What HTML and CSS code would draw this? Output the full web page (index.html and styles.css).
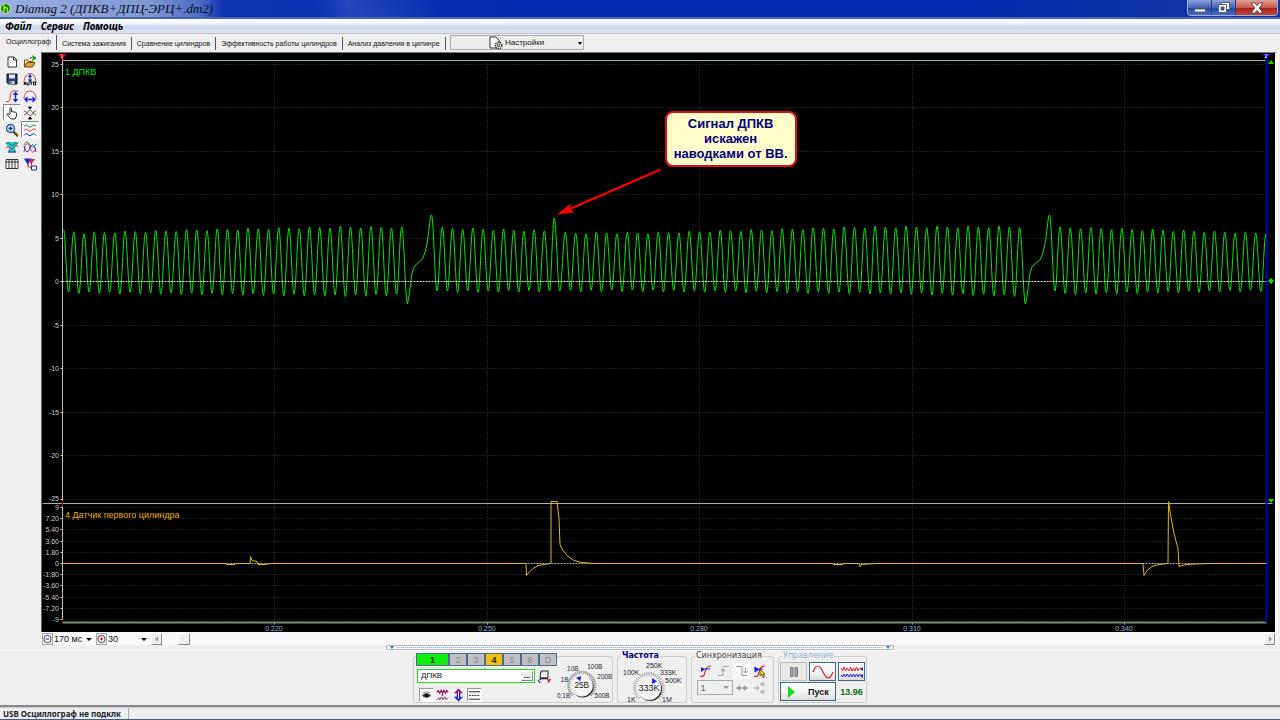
FILE: index.html
```html
<!DOCTYPE html>
<html lang="ru">
<head>
<meta charset="utf-8">
<title>Diamag 2</title>
<link rel="stylesheet" href="styles.css">
</head>
<body>
<header class="titlebar">
  <svg class="app-icon" width="11" height="11" viewBox="0 0 11 11"><circle cx="5.5" cy="5.5" r="5" fill="#138a13" stroke="#d8f0a0"/><path d="M4 2v7M4 6c1-2 3-2 3.500 0v3" fill="none" stroke="#c8f040" stroke-width="1.200"/></svg>
  <h1 class="app-title">Diamag 2 (ДПКВ+ДПЦ-ЭРЦ+.dm2)</h1>
  <div class="window-buttons">
    <button class="win-btn win-min" aria-label="Свернуть"><svg width="14" height="12" viewBox="0 0 14 12"><rect x="1.500" y="7" width="11" height="3" fill="#fff" stroke="#555d7a"/></svg></button>
    <button class="win-btn win-max" aria-label="Развернуть"><svg width="14" height="13" viewBox="0 0 14 13"><path d="M4.500 1.500h8v7h-8z" fill="#fff" stroke="#555d7a"/><path d="M1.500 3.500h8v8h-8z" fill="#fff" stroke="#555d7a"/><path d="M4 6h3v3H4z" fill="#2a48a8" stroke="#555d7a"/></svg></button>
    <button class="win-btn win-close" aria-label="Закрыть"><svg width="14" height="12" viewBox="0 0 14 12"><path d="M1 1h4l2 2.500L9 1h4L9.200 6 13 11H9L7 8.500 5 11H1l3.800-5z" fill="#fff" stroke="#5b4550"/></svg></button>
  </div>
</header>
<nav class="menubar">
  <button class="menu-item">Файл</button><button class="menu-item">Сервис</button><button class="menu-item">Помощь</button>
</nav>
<div class="tabs">
  <button class="tab active">Осциллограф</button><button class="tab">Система зажигания</button><button class="tab">Сравнение цилиндров</button><button class="tab">Эффективность работы цилиндров</button><button class="tab">Анализ давления в цилинре</button>
  <button class="settings"><svg width="14" height="14" viewBox="0 0 14 14"><path d="M1 1h6l3 3v8H1z" fill="#fff" stroke="#333"/><circle cx="9.500" cy="9.500" r="3.300" fill="#dfe8df" stroke="#344034" stroke-width="1.500" stroke-dasharray="1.500 .8"/><circle cx="9.500" cy="9.500" r="1.300" fill="#eee" stroke="#344034"/></svg><span>Настройки</span><i class="caret"></i></button>
</div>
<main class="workspace">
  <aside class="tools">
    <button class="tool" aria-label="Новый"><svg viewBox="0 0 14 14"><path d="M3 2h6l2.500 2.500V12H3zM8.500 2v3h3" fill="#fff" stroke="#333"/></svg></button>
    <button class="tool" aria-label="Открыть"><svg viewBox="0 0 14 14"><path d="M1.500 12V5h3l1 1.500h4V8" fill="#fff0a0" stroke="#6b5510"/><path d="M1.500 12l2.500-4.500h8L9.500 12z" fill="#e0a528" stroke="#6b4a10"/><path d="M7 4q1-2 2-1.500" fill="none" stroke="#333"/><path d="M9.500 0l4 3-4 3.500z" fill="#10a010"/></svg></button>
    <button class="tool" aria-label="Сохранить"><svg viewBox="0 0 14 14"><path d="M2 2h10v10H3.500L2 10.500z" fill="#27376e" stroke="#111"/><path d="M4 2.500h6v4H4z" fill="#dfe6f7"/><path d="M4.500 9h5v3h-5z" fill="#c8cedc"/><path d="M5.500 9.500h1v2h-1z" fill="#111"/></svg></button>
    <button class="tool" aria-label="Автоматически"><svg viewBox="0 0 14 14"><path d="M1 11C1 5 4 1.500 7 1.500S13 5 13 11" fill="none" stroke="#e23a3a"/><path d="M7 3v6M5.500 5L7 3l1.500 2M5.500 7.500L7 9.500l1.500-2" fill="none" stroke="#1722a8" stroke-width="1.200"/><path d="M1 13l1-3 1 3M4 10v3h2v-3M7 10h2.500M8.200 10v3M10.500 10h2v3h-2z" fill="none" stroke="#111"/></svg></button>
    <button class="tool" aria-label="Амплитуда"><svg viewBox="0 0 14 14"><path d="M1 12.500h2c2 0 2-3 2.500-6s1-4.500 2.500-4.500h5" fill="none" stroke="#e23a3a"/><path d="M10.500 4v8M8.500 6l2-2.500 2 2.500M8.500 10l2 2.500 2-2.500" fill="none" stroke="#1722d8" stroke-width="1.300"/></svg></button>
    <button class="tool" aria-label="Длительность"><svg viewBox="0 0 14 14"><path d="M1 10C1 5 4 2 7 2s6 3 6 8" fill="none" stroke="#e23a3a"/><path d="M2 10.500h10M4.500 8L2 10.500 4.500 13M9.500 8l2.500 2.500L9.500 13" fill="none" stroke="#1722d8" stroke-width="1.300"/></svg></button>
    <button class="tool pressed" aria-label="Рука"><svg viewBox="0 0 14 14"><path d="M5 8V2.500c0-1.300 1.500-1.300 1.500 0V6c0-1 1.700-1 1.700.3 0-1 1.700-.8 1.700.4 0-.8 1.600-.6 1.600.6V10l-1.500 3H6L2 8.500C1.500 7.500 3 7 5 9" fill="#fff" stroke="#333"/></svg></button>
    <button class="tool" aria-label="Центрировать"><svg viewBox="0 0 14 14"><path d="M1 5c3 0 4 5 6 5s3-5 6-5" fill="none" stroke="#e23a3a"/><path d="M1 9c3 0 4-5 6-5s3 5 6 5" fill="none" stroke="#20903a"/><path d="M5.500 1h3L7 3zM5.500 13h3L7 11z" fill="#111" stroke="#111"/></svg></button>
    <button class="tool" aria-label="Лупа"><svg viewBox="0 0 14 14"><path d="M8 8l5 5" stroke="#9a6a20" stroke-width="2.500"/><path d="M8 9l4.500 4.500" stroke="#222"/><circle cx="5.500" cy="5.500" r="4" fill="#cfe8fb" stroke="#24578e" stroke-width="1.300"/><path d="M3.500 5.500h4M5.500 3.500v4" stroke="#12308a" stroke-width="1.300"/></svg></button>
    <button class="tool pressed" aria-label="Раздельно"><svg viewBox="0 0 14 14" fill="none"><path d="M1 3.500Q3 .5 5 3t4 0 4 0" stroke="#20903a"/><path d="M1 7.500Q3 4.500 5 7t4 0 4 0" stroke="#e23a3a"/><path d="M1 12.500Q3 9 5 11.500t4 0 4 1" stroke="#1722d8"/></svg></button>
    <button class="tool" aria-label="Зеркало"><svg viewBox="0 0 14 14"><path d="M2 2h10v3.500L10 8v4H4V8L2 5.500z" fill="#12d5dc"/><path d="M1 4q2-3 4 0t4 0 4 0" fill="none" stroke="#16803a" stroke-width="1.200"/><path d="M1 8q2-3 4 0t4-1 4 0" fill="none" stroke="#d22a2a"/><path d="M4 12h6M4 10v3M10 10v3" stroke="#1722a8"/></svg></button>
    <button class="tool" aria-label="Совместно"><svg viewBox="0 0 14 14" fill="none"><path d="M1 5c2-5 4-3 6 0s4 3 6-1" stroke="#20903a"/><path d="M1 12C3 1 5 2 7 8s4 5 6 0" stroke="#e23a3a"/><path d="M1 6c2 8 4 7 6 2s4-5 6 4" stroke="#1722d8"/></svg></button>
    <button class="tool" aria-label="Таблица"><svg viewBox="0 0 14 14"><path d="M1 2.500h12v9H1zM1 5h12M4 2.500v9M7 2.500v9M10 2.500v9" fill="#fff" stroke="#333"/></svg></button>
    <button class="tool" aria-label="Фильтр"><svg viewBox="0 0 14 14"><path d="M1 1.500h8L5.500 6v3z" fill="#1722d8"/><path d="M5.500 2h7L9 6v4z" fill="#d22a4a"/><path d="M5 6v4h3" fill="none" stroke="#d22a2a"/><path d="M8.500 9h5v4h-5z" fill="#fff" stroke="#1722a8"/></svg></button>
  </aside>
  <section class="scope">
    <div class="plot">
      <svg class="chart" id="chart" role="img" aria-label="Осциллограмма"></svg>
      <div class="callout">Сигнал ДПКВ<br>искажен<br>наводками от ВВ.</div>
    </div>
    <div class="range">
      <button class="mini" aria-label="Уменьшить"><svg width="10" height="10" viewBox="0 0 10 10"><circle cx="5" cy="5" r="4" fill="#fff" stroke="#333"/><path d="M3 5h4" stroke="#1722a8" stroke-width="1.200"/></svg></button>
      <label class="pick pick-time"><select aria-label="Развертка"><option>170 мс</option></select></label>
      <button class="mini" aria-label="Увеличить"><svg width="10" height="10" viewBox="0 0 10 10"><circle cx="5" cy="5" r="4" fill="#fff" stroke="#333"/><path d="M3 5h4M5 3v4" stroke="#b01010" stroke-width="1.200"/></svg></button>
      <label class="pick pick-count"><select aria-label="Количество"><option>30</option></select></label>
      <button class="mini raised" aria-label="Влево"><svg width="6" height="6" viewBox="0 0 6 6"><path d="M4 0v6L1 3z" fill="#999"/></svg></button>
      <div class="track"><div class="thumb"></div></div>
      <button class="mini raised" aria-label="Вправо"><svg width="6" height="6" viewBox="0 0 6 6"><path d="M2 0v6l3-3z" fill="#999"/></svg></button>
    </div>
  </section>
</main>
<div class="splitter"><i class="caret blue"></i><span class="dots"></span><i class="caret blue"></i></div>
<section class="panel">
  <fieldset class="group channel">
    <div class="channel-main">
      <div class="channels"><button class="ch ch-on">1</button><button class="ch">2</button><button class="ch">3</button><button class="ch ch-amber">4</button><button class="ch">5</button><button class="ch">6</button><button class="ch">D</button></div>
      <div class="name-row"><div class="name-box"><input aria-label="Имя канала" value="ДПКВ"><button class="more" aria-label="Выбрать">...</button></div>
        <button class="flat" aria-label="Датчик"><svg width="14" height="14" viewBox="0 0 14 14"><path d="M4 1h7v7H3z" fill="#eee" stroke="#222"/><path d="M3 8.500h8" stroke="#222" stroke-width="1.500"/><path d="M4 9.500q-4 0-1 3M1 10.500l2 2.500" fill="none" stroke="#1722d8"/><path d="M10 9.500q4 1 1 3M13.500 9l-2.500 3.500" fill="none" stroke="#e02020" stroke-width="1.300"/></svg></button></div>
      <div class="view-row">
        <button class="view on" aria-label="Показать"><svg width="14" height="14" viewBox="0 0 14 14"><path d="M2 7.500q5-5 10 0-5 5-10 0z" fill="#444"/><circle cx="7" cy="7.500" r="2" fill="#111"/><path d="M3 5q4-3 8 0" fill="none" stroke="#888"/></svg></button>
        <button class="view" aria-label="Сигнал"><svg width="14" height="14" viewBox="0 0 14 14" fill="none" stroke="#8a1470"><path d="M1 4l1.500-1.500L4 5l1.500-3L7 5l1.500-3L10 5l1.500-3L13 4" stroke-width="1.300"/><path d="M1 12l2-2 1 2 2-3 1.500 3 2-3 1.500 3 2-2"/><path d="M5.500 6.500h3L7 8z" fill="#222" stroke="none"/></svg></button>
        <button class="view" aria-label="Сдвиг"><svg width="14" height="14" viewBox="0 0 14 14"><path d="M7 0l5 5H9v2H5V5H2z" fill="#8a1470"/><path d="M7 14l5-5H9V7H5v2H2z" fill="#1722e8"/><path d="M7 3v8" stroke="#eee"/></svg></button>
        <button class="view on" aria-label="Линии"><svg width="14" height="14" viewBox="0 0 14 14" stroke="#222"><path d="M1 3.500h12M1 11.500h12"/><path d="M1 7.500h12" stroke-dasharray="2 1"/></svg></button>
      </div>
    </div>
    <svg class="knob" id="volts" width="60" height="45" viewBox="0 0 60 45" role="img" aria-label="Предел 25 В"></svg>
  </fieldset>
  <fieldset class="group freq"><legend>Частота</legend>
    <svg class="knob" id="freq" width="66" height="44" viewBox="0 0 66 44" role="img" aria-label="Частота 333K"></svg>
  </fieldset>
  <fieldset class="group sync"><legend>Синхронизация</legend>
    <div class="sync-grid">
      <button class="flat" aria-label="Фронт"><svg width="14" height="14" viewBox="0 0 14 14" fill="none"><path d="M1 12q4 2 5-4t6-6" stroke="#e02020" stroke-width="1.200"/><path d="M2 5h9" stroke="#1722e8"/><path d="M2 3v5l3.500-2.500z" fill="#1722e8"/></svg></button>
      <button class="flat" aria-label="Нарастание"><svg width="14" height="14" viewBox="0 0 14 14" fill="none" stroke="#aaa"><path d="M1 11.500h5V2.500h6M3.500 6h5M4.500 7.500L6 5.500l1.500 2"/></svg></button>
      <button class="flat lit" aria-label="Спад"><svg width="14" height="14" viewBox="0 0 14 14" fill="none" stroke="#999"><path d="M1 2.500h6v9h5M10.500 4v5M8.500 7l2 2 2-2"/></svg></button>
      <button class="flat" aria-label="Курсор"><svg width="14" height="14" viewBox="0 0 14 14"><path d="M1 12q4 2 5-4t6-6" fill="none" stroke="#e02020" stroke-width="1.200"/><path d="M1 5h9M2 3v5l3.500-2.500z" fill="#1722e8" stroke="#1722e8"/><path d="M7 5v7l1.500-1.500 1.500 3 1.500-.7-1.500-2.500H12z" fill="#ffe020" stroke="#222" stroke-width=".7"/></svg></button>
      <label class="pick pick-sync"><select aria-label="Канал синхронизации" disabled><option>1</option></select></label>
      <button class="flat" aria-label="Сжать"><svg width="14" height="14" viewBox="0 0 14 14"><path d="M1 7h4M13 7H9" stroke="#999" stroke-width="1.500"/><path d="M3.500 4v6L7 7zM10.500 4v6L7 7z" fill="#999"/></svg></button>
      <button class="flat" aria-label="Точка"><svg width="14" height="14" viewBox="0 0 14 14" fill="none" stroke="#999"><path d="M1 7h5M4 5l2 2-2 2M12 4H8l3-3M8 4V2M12 10H8l3 3M8 10v2"/></svg></button>
    </div>
  </fieldset>
  <fieldset class="group run"><legend>Управление</legend>
    <div class="run-grid">
      <button class="cmd dim" aria-label="Пауза"><svg width="10" height="12" viewBox="0 0 10 12"><path d="M1.500 1.500h2.500v9H1.500zM6 1.500h2.500v9H6z" fill="#aaa" stroke="#777"/></svg></button>
      <button class="cmd" aria-label="Синус"><svg width="22" height="14" viewBox="0 0 22 14"><path d="M1 7C4-1 7-1 11 7s7 8 10 0" fill="none" stroke="#e22020" stroke-width="1.200"/></svg></button>
      <button class="cmd" aria-label="Импульсы"><svg width="24" height="14" viewBox="0 0 24 14" fill="none"><path d="M1 3l1.500 3L4 2l1.500 4L7 3l2 3 1.500-4L12 6l1.500-3L15 6l1.500-4L18 6l1.500-3 2 2" stroke="#e22020"/><path d="M1 10l1.500 2L4 9l1.500 3L7 9l2 3 1.500-3L12 12l1.500-3 1.500 3 1.500-3 1.500 3 1.500-3 2 2" stroke="#1722e8"/><path d="M23 2v4l-3-2zM23 9v4l-3-2z" fill="#1722a8"/></svg></button>
      <button class="cmd start"><svg width="9" height="12" viewBox="0 0 9 12"><path d="M1 0v12l7-6z" fill="#10e010"/></svg><span>Пуск</span></button>
      <output class="volt">13.96</output>
    </div>
  </fieldset>
</section>
<footer class="status"><span class="status-text">USB Осциллограф не подклк</span></footer>
<script src="scope.js"></script>
</body>
</html>
```

FILE: styles.css
```css
* { box-sizing: border-box; }
body {
  margin: 0; height: 100vh; display: flex; flex-direction: column; overflow: hidden;
  background: #efefef; color: #111; font: 8px/10px "Liberation Sans", Arial, sans-serif;
  border-bottom: 1px solid #4258a0;
}
button, input, select { font: inherit; color: inherit; margin: 0; padding: 0; border: 0; background: none; border-radius: 0; }
button { display: flex; align-items: center; justify-content: center; white-space: nowrap; }
svg { display: block; }

.titlebar {
  flex: none; height: 19px; display: flex; align-items: center; gap: 4px; color: #101018;
  background:
    linear-gradient(90deg, rgba(160,182,228,.95) 0, rgba(138,162,216,.9) 150px, rgba(100,130,205,.7) 200px, transparent 224px),
    linear-gradient(65deg, transparent 290px, rgba(70,105,205,.4) 320px, rgba(40,80,195,.3) 375px, transparent 400px),
    linear-gradient(90deg, #1438b4 0, #0229ae 45%, #0229ae 75%, #12389f 100%);
  border-bottom: 2px solid #4a62b0;
}
.app-title { flex: 1; margin: 0; font: italic 13px/16px "Liberation Serif", serif; }
.window-buttons { display: flex; align-self: flex-start; margin-right: 2px; border: 1px solid #9fb0dc; border-top: 0; border-radius: 0 0 4px 4px; overflow: hidden; }
.win-btn { height: 15px; width: 24px; background: linear-gradient(#8fa3dc, #4562b8 50%, #2443a0 52%, #4c6cc4); border-right: 1px solid #25387c; }
.win-close { width: 41px; border-right: 0; background: linear-gradient(#e0a29a, #c8584c 50%, #a82018 52%, #c04838); }

.menubar { flex: none; height: 15px; display: flex; gap: 9px; padding-left: 5px; background: linear-gradient(#fff, #eef1f9 35%, #d3daec 50%, #dce2f2); border-bottom: 1px solid #bfc3cc; }
.menu-item { font: italic bold 10px/14px "Noto Sans", sans-serif; color: #000; }

.tabs { flex: none; height: 18px; display: flex; align-items: flex-end; padding: 1px 0 2px 1px; }
.tab { height: 13px; padding: 0 5px; border-right: 1px solid #555; font-size: 7px; }
.tab.active { align-self: flex-start; height: 15px; padding-bottom: 2px; }
.settings { position: relative; width: 134px; height: 15px; margin-left: 4px; gap: 2px; border: 1px solid #aaa; background: #ededed; }
.settings .caret { position: absolute; right: 1px; top: 6px; }
.caret { display: block; width: 0; height: 0; border: 2px solid transparent; border-top: 3px solid #000; border-bottom: 0; }

.workspace { flex: 1; min-height: 0; display: flex; }
.tools { flex: none; width: 41px; display: grid; grid-template-columns: 18px 18px; grid-auto-rows: 17px; padding: 1px 0 0 3px; align-content: start; }
.tool { border: 1px solid transparent; }
.tool svg { width: 14px; height: 14px; }
.pressed { background: #f9f9f9; border-color: #888 #fff #fff #888; }

.scope { flex: 1; min-width: 0; display: flex; flex-direction: column; margin-right: 2px; border-right: 3px solid #fff; border-top: 1px solid #777; }
.plot { flex: 1; min-height: 0; position: relative; background: #000; border-left: 1px solid #666; }
.chart { width: 100%; height: 100%; position: absolute; }
.chart text { font-family: "Liberation Sans", Arial, sans-serif; }
.callout {
  position: absolute; left: 50.5%; top: 10%; padding: 3px 7px 4px; border: 2px solid #e01010; border-radius: 8px;
  background: #ffffcc; color: #000080; font-weight: bold; font-size: 13px; line-height: 15px; text-align: center; white-space: nowrap;
}
.range { flex: none; height: 13px; display: flex; align-items: center; gap: 1px; background: #fafafa; padding-left: 1px; font-size: 9px; }
.mini { width: 11px; height: 12px; border: 1px solid #aaa; background: #eee; }
.raised { border-color: #fff #888 #888 #fff; }
.pick { position: relative; display: block; }
.pick select { appearance: none; width: 100%; height: 12px; outline: 0; }
.pick::after { content: ""; position: absolute; right: 3px; top: 5px; border: 3px solid transparent; border-top-color: #000; border-bottom: 0; }
.pick-time { width: 41px; }
.pick-count { width: 42px; }
.track { flex: 1; height: 12px; padding-left: 15px; background: #f8f8f8; }
.thumb { width: 12px; height: 12px; background: #eee; border: 1px solid; border-color: #fff #888 #888 #fff; }

.splitter { flex: none; width: 508px; height: 5px; margin: 0 auto; display: flex; align-items: center; gap: 3px; padding: 0 3px; border: 1px solid #bbb; background: #f4f6f8; }
.dots { flex: 1; height: 1px; background: repeating-linear-gradient(90deg, #78b4e8 0 1px, #dceaf5 1px 2px); }
.blue { border-top-color: #2078c0; }

.panel { flex: none; display: flex; justify-content: center; align-items: flex-end; gap: 4px; padding: 1px 0 2px; border-top: 1px solid #fff; border-bottom: 2px solid #888; }
.group { margin: 0; padding: 0; min-width: 0; border: 1px solid #ccc; border-radius: 3px; }
.group legend { height: 8px; margin-left: 3px; padding: 0 1px; font: bold 8px/8px "DejaVu Sans", sans-serif; color: #000080; }
.channel { width: 200px; height: 47px; display: flex; justify-content: space-between; padding: 0 0 0 2px; }
.channel-main { display: flex; flex-direction: column; gap: 3px; margin-top: -4px; }
.channels { display: flex; }
.ch { width: 18px; height: 13px; border: 1px solid #4c6c90; background: #bfc0c4; color: #888; font-size: 9px; }
.ch-on { width: 33px; background: #10ee10; color: #004000; font-weight: bold; }
.ch-amber { background: #f5c010; color: #222; font-weight: bold; }
.name-row { display: flex; gap: 2px; margin-left: 1px; }
.name-box { width: 118px; height: 14px; display: flex; padding: 1px; border: 1px solid #20e020; background: #fff; }
.name-box input { flex: 1; min-width: 0; padding-left: 2px; outline: 0; font-size: 8px; }
.more { width: 12px; background: #eee; border: 1px solid; border-color: #fff #888 #888 #fff; font-weight: bold; }
.view-row { display: flex; gap: 1px; margin-left: 3px; }
.view { width: 15px; height: 14px; border: 1px solid transparent; }
.on { border-color: #999 #fff #fff #999; background: #f8f8f8; }
.knob { align-self: flex-end; }
.knob text { font-family: "Liberation Sans", Arial, sans-serif; }
.freq { width: 70px; height: 51px; }
.sync { width: 83px; height: 51px; }
.group.sync legend { color: #444; font-weight: normal; }
.group.run legend { color: #8fb0d4; font-weight: normal; }
.sync-grid { display: grid; grid-template-columns: repeat(4, 18px); gap: 1px 0; justify-content: center; padding-top: 3px; }
.flat { height: 16px; }
.lit { background: #f8f8f8; }
.pick-sync { grid-column: span 2; border: 1px solid #aaa; height: 15px; color: #666; font-size: 9px; }
.pick-sync select { height: 13px; padding-left: 3px; opacity: 1; }
.pick-sync::after { border-top-color: #999; }
.run { width: 89px; height: 51px; }
.run-grid { display: grid; grid-template-columns: 27px 27px 27px; gap: 1px 2px; padding: 2px 1px 0; grid-template-rows: 19px 19px; }
.cmd { border: 1px solid #3c6890; background: linear-gradient(#fff, #f4f4f4 55%, #dcdcdc); }
.dim { border-color: #bbb; background: #e8e8e8; }
.start { grid-column: span 2; gap: 12px; font-weight: bold; font-size: 9px; }
.volt { align-self: center; justify-self: center; color: #107010; font-weight: bold; font-size: 9px; }

.status { flex: none; height: 12px; border-top: 1px solid #ccc; }
.status-text { display: block; width: 129px; height: 11px; padding-left: 3px; overflow: hidden; white-space: nowrap; border-right: 1px solid #aaa; font: bold 8px/11px "Noto Sans", sans-serif; color: #223; }
```

FILE: scope.js
```js
const NS = "http://www.w3.org/2000/svg";

function add(parent, name, attrs, text) {
  const el = document.createElementNS(NS, name);
  for (const key in attrs) el.setAttribute(key, attrs[key]);
  if (text !== undefined) el.textContent = text;
  parent.appendChild(el);
  return el;
}

// Linear interpolation through [position, value] pairs.
function along(points, t) {
  for (let i = 1; i < points.length; i++) {
    const [a, va] = points[i - 1], [b, vb] = points[i];
    if (t <= b) return va + (vb - va) * (t - a) / (b - a);
  }
  return points[points.length - 1][1];
}

const W = 1233, H = 579;
const LEFT = 20, RIGHT = 1224;
const TOPS = [[20, 177], [40, 180], [160, 177], [300, 174], [400, 175], [505, 178], [525, 180], [610, 180], [830, 174], [980, 174], [1040, 175], [1213, 180]];
const BOTTOMS = [[20, 239], [50, 239], [300, 242], [360, 241], [396, 238], [590, 237], [870, 240], [970, 242], [1030, 240], [1213, 237]];

// Crests of one run of teeth; each is followed by a trough half a period on.
function run(first, last, count) {
  const out = [], step = (last - first) / count;
  for (let i = 0; i <= count; i++) {
    const x = first + i * step;
    out.push([x, along(TOPS, x) + (i % 3) * .8 - .8]);
    if (i < count) out.push([x + step / 2, along(BOTTOMS, x) + (i % 2) * 1.5]);
  }
  return out;
}

function gap(x) {
  return [[x, 251], [x + 24, 162], [x + 29.5, 238]];
}

function crankPath(sx, sy) {
  const keys = [...run(21.5, 359.7, 33), ...gap(365.5), ...run(400.3, 502.3, 10), [507.5, 238], [512.2, 165], [517.8, 238],
    ...run(523.3, 977.7, 44), ...gap(983.5), ...run(1018, 1224, 20)];
  let d = `M${keys[0][0] * sx} ${keys[0][1] * sy}`;
  for (let i = 1; i < keys.length; i++) {
    const [x0, y0] = keys[i - 1], [x1, y1] = keys[i];
    if (x1 - x0 > 20) {
      for (const [dx, y] of [[2, 240], [4, 223], [6, 215], [9, 211], [12, 209], [15, 206], [18, 198], [20, 188], [22, 172], [23, 164]]) d += `L${(x0 + dx) * sx} ${y * sy}`;
      d += `L${x1 * sx} ${y1 * sy}`;
    } else {
      const m = (x1 - x0) * .38;
      d += `C${(x0 + m) * sx} ${y0 * sy} ${(x1 - m) * sx} ${y1 * sy} ${x1 * sx} ${y1 * sy}`;
    }
  }
  return d;
}

const CYLINDER = [[20, 510], [183, 510], [184, 511], [193, 511], [194, 510], [208, 510], [208.5, 503], [210, 507], [215, 508], [216, 511], [223, 511], [229, 510],
  [484, 510], [484.5, 522], [487, 519], [491, 515], [496, 512], [502, 511], [509, 510], [509, 448], [515, 448], [517, 465], [518, 491], [521, 497], [526, 503], [532, 507], [540, 509], [552, 510],
  [790, 510], [792, 511], [801, 511], [802, 510], [817, 510], [818, 513], [819, 511], [834, 510],
  [1101, 510], [1102, 522], [1105, 517], [1110, 513], [1117, 511], [1126, 510], [1126.5, 448], [1129, 464], [1132, 480], [1136, 495], [1137, 513], [1144, 511], [1166, 510], [1224, 510]];

function draw() {
  const svg = document.getElementById("chart");
  svg.textContent = "";
  const w = svg.clientWidth, h = svg.clientHeight, sx = w / W, sy = h / H;
  const line = (x1, y1, x2, y2, stroke, extra) =>
    add(svg, "line", { x1: Math.round(x1 * sx) + .5, y1: Math.round(y1 * sy) + .5, x2: Math.round(x2 * sx) + .5, y2: Math.round(y2 * sy) + .5, stroke, ...extra });
  const label = (x, y, text, fill, size, anchor) =>
    add(svg, "text", { x: x * sx, y: y * sy, fill, "font-size": size, "text-anchor": anchor }, text);
  const dots = { "stroke-dasharray": "1 2" };

  for (let i = -5; i <= 5; i++) {
    const y = 228 - i * 43.5;
    if (i) line(LEFT, y, RIGHT, y, "#383838", dots);
    line(LEFT - 2, y, LEFT, y, "#ccc");
    label(17, y + (i === -5 ? 2 : 3), i * 5, "#ccc", 7, "end");
  }
  for (let i = -5; i <= 5; i++) {
    const y = 510 - i * 11.2;
    if (i) line(LEFT, y, RIGHT, y, "#343434", dots);
    line(LEFT - 2, y, LEFT, y, "#ccc");
    label(17, y + 3, Math.abs(i) === 5 ? i * 9 / 5 : i ? (i * 1.8).toFixed(2) : 0, "#ccc", 7, "end");
  }
  [[232, "0.220"], [445, "0.250"], [657, "0.280"], [870, "0.310"], [1082, "0.340"]].forEach(([x, t]) => {
    line(x, 10, x, 569, "#383838", dots);
    line(x, 569, x, 571, "#ccc");
    label(x, 578, t, "#8cb8dc", 7, "middle");
  });
  line(LEFT, 7, RIGHT, 7, "#9cbf9c");
  line(0, 450, 1230, 450, "#aaa");
  line(LEFT, 569, RIGHT, 569, "#789078", { "stroke-width": 2 });
  line(LEFT, 5, LEFT, 569, "#bbb");
  line(RIGHT, 5, RIGHT, 569, "#0000b8", { "stroke-width": 2 });
  add(svg, "path", { d: crankPath(sx, sy), fill: "none", stroke: "#00e800" });
  line(LEFT, 228, RIGHT, 228, "#ddd", { "stroke-dasharray": "2 1" });
  line(LEFT, 510, RIGHT, 510, "#aaa", { "stroke-dasharray": "2 1" });
  add(svg, "path", { d: "M" + CYLINDER.map(([x, y]) => `${x * sx} ${y * sy + .5}`).join("L"), fill: "none", stroke: "#e8b800" });
  label(23, 22, "1 ДПКВ", "#00e000", 9, "start");
  label(23, 465, "4 Датчик первого цилиндра", "#e8b000", 9, "start");
  const mark = (x, y, d, fill) => add(svg, "path", { d, fill, transform: `translate(${x * sx} ${y * sy})` });
  mark(LEFT, 1, "M-4 0h9l-4.500 4v4h-1v-4z", "#f00000");
  mark(RIGHT, 1, "M-4 0h9l-4.500 4z", "#2020ff");
  label(LEFT, 5, "1", "#fff", 5, "middle");
  label(RIGHT, 5, "2", "#fff", 5, "middle");
  mark(1229, 7, "M0 0l3 4h-6z", "#00e800");
  mark(1229, 446, "M0 4l3-4h-6z", "#00e800");
  mark(1229, 228, "M0-3l3 3-3 3-3-3z", "#00e800");
  line(LEFT, 447, LEFT, 453, "#b00000");
  line(LEFT, 566, LEFT, 570, "#b00000");
  line(618, 116, 526, 156, "#ff0000", { "stroke-width": 2 });
  add(svg, "path", { d: `M${515 * sx} ${161.5 * sy}l14-11 -1 5 4 4z`, fill: "#ff0000" });
}

function knob(id, cx, cy, value, angle, labels) {
  const svg = document.getElementById(id);
  for (let a = 135; a <= 405; a += 9) {
    const r = a * Math.PI / 180;
    add(svg, "line", { x1: cx + 13 * Math.cos(r), y1: cy + 13 * Math.sin(r), x2: cx + 16 * Math.cos(r), y2: cy + 16 * Math.sin(r), stroke: "#999", "stroke-width": id === "volts" ? 1.500 : 1 });
  }
  add(svg, "circle", { cx: cx + 1, cy: cy + 1, r: 12, fill: "#151515" });
  add(svg, "circle", { cx, cy, r: 12, fill: "#f4f4f4", stroke: "#ccc", "stroke-width": .5 });
  add(svg, "path", { d: "M-3-10l3 5 3-5z", fill: "#1722e8", transform: `translate(${cx} ${cy}) rotate(${angle})` });
  add(svg, "text", { x: cx, y: cy + 3, "font-size": 9, fill: "#222", "text-anchor": "middle" }, value);
  labels.forEach(([x, y, text]) => add(svg, "text", { x, y, "font-size": 7, fill: "#223" }, text));
}

knob("volts", 27, 29, "25В", -20, [[11, 13, "10В"], [33, 11, "100В"], [4, 25, "1В"], [44, 22, "200В"], [0, 43, "0,1В"], [41, 43, "500В"]]);
knob("freq", 31, 28, "333K", 35, [[5, 15, "100K"], [28, 8, "250K"], [42, 15, "333K"], [47, 23, "500K"], [9, 42, "1K"], [44, 42, "1M"]]);
draw();
window.addEventListener("resize", draw);
```
